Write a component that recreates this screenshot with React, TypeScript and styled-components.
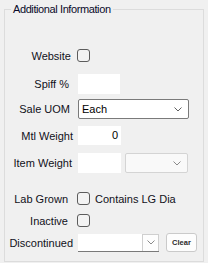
import React from "react";
import styled, { createGlobalStyle } from "styled-components";

const GlobalStyle = createGlobalStyle`
  html, body {
    margin: 0;
    padding: 0;
    background: #f0f0f0;
    font-family: "Liberation Sans", Arial, sans-serif;
  }
`;

const Page = styled.div`
  width: 208px;
  height: 263px;
  overflow: hidden;
  background: #f0f0f0;
`;

const Group = styled.fieldset`
  box-sizing: border-box;
  margin: 2px 0 0 4px;
  padding: 0;
  width: 200px;
  height: 260px;
  border: 1px solid #dcdcdc;
  min-width: 0;
`;

const Legend = styled.legend`
  margin-left: 6px;
  padding: 0 2px;
  font-size: 11px;
  line-height: 14px;
  letter-spacing: -0.4px;
  color: #0a0a2a;
`;

const Body = styled.div`
  display: flex;
  flex-direction: column;
`;

const Row = styled.div<{ $top: number; $h: number }>`
  display: flex;
  align-items: center;
  margin-top: ${(p) => p.$top}px;
  height: ${(p) => p.$h}px;
`;

const Label = styled.div<{ $trim?: number }>`
  box-sizing: border-box;
  width: 68px;
  padding-right: ${(p) => p.$trim || 0}px;
  text-align: right;
  font-size: 11px;
  color: #101020;
  white-space: nowrap;
`;

const Check = styled.span`
  box-sizing: border-box;
  display: inline-block;
  width: 13px;
  height: 13px;
  margin-left: 4px;
  border: 1px solid #5c5c5c;
  border-radius: 3px;
  background: #f3f3f3;
`;

const CheckText = styled.span`
  margin-left: 5px;
  font-size: 11px;
  color: #101020;
  white-space: nowrap;
`;

const TextBox = styled.div<{ $w: number }>`
  box-sizing: border-box;
  margin-left: 5px;
  width: ${(p) => p.$w}px;
  height: 100%;
  background: #fff;
  font-size: 11px;
  color: #000;
  text-align: right;
  padding-right: 3px;
  line-height: 19px;
`;

const Combo = styled.div<{ $w: number; $off?: boolean; $gap?: number }>`
  box-sizing: border-box;
  display: flex;
  align-items: center;
  justify-content: space-between;
  margin-left: ${(p) => (p.$gap === undefined ? 5 : p.$gap)}px;
  width: ${(p) => p.$w}px;
  height: 100%;
  padding: 0 6px 0 3px;
  background: ${(p) => (p.$off ? "#f9f9f9" : "#fff")};
  border: 1px solid ${(p) => (p.$off ? "#d4d4d4" : "#7a7a7a")};
  border-radius: 2px;
  font-size: 11px;
  color: #000;
`;

const Picker = styled.div`
  box-sizing: border-box;
  display: flex;
  justify-content: flex-end;
  margin-left: 5px;
  width: 81px;
  height: 18px;
  background: #fff;
  border-bottom: 1px solid #7a7a7a;
`;

const PickButton = styled.div`
  box-sizing: border-box;
  display: flex;
  align-items: center;
  justify-content: center;
  width: 17px;
  height: 100%;
  border: 1px solid #cfcfcf;
  border-bottom: none;
  background: #fdfdfd;
`;

const ClearButton = styled.div`
  box-sizing: border-box;
  display: flex;
  align-items: center;
  justify-content: center;
  margin-left: 7px;
  width: 31px;
  height: 19px;
  border: 1px solid #cacaca;
  border-radius: 3px;
  background: #fdfdfd;
  font-size: 7.5px;
  font-weight: bold;
  color: #2a2a2a;
`;

const Chevron = ({ color = "#606060" }: { color?: string }) => (
  <svg width="8" height="5" viewBox="0 0 8 5">
    <polyline points="0.5,0.5 4,4 7.5,0.5" fill="none" stroke={color} strokeWidth="1" />
  </svg>
);

export default function App() {
  return (
    <Page>
      <GlobalStyle />
      <Group>
        <Legend>Additional Information</Legend>
        <Body>
          <Row $top={33} $h={13}>
            <Label $trim={2}>Website</Label>
            <Check />
          </Row>
          <Row $top={12} $h={20}>
            <Label $trim={4}>Spiff %</Label>
            <TextBox $w={42} />
          </Row>
          <Row $top={5} $h={20}>
            <Label $trim={3}>Sale UOM</Label>
            <Combo $w={111}>
              <span>Each</span>
              <Chevron />
            </Combo>
          </Row>
          <Row $top={7} $h={19}>
            <Label>Mtl Weight</Label>
            <TextBox $w={43}>0</TextBox>
          </Row>
          <Row $top={8} $h={20}>
            <Label $trim={1}>Item Weight</Label>
            <TextBox $w={43} />
            <Combo $w={63} $off $gap={4}>
              <span />
              <Chevron color="#8a8a8a" />
            </Combo>
          </Row>
          <Row $top={19} $h={13}>
            <Label $trim={5}>Lab Grown</Label>
            <Check />
            <CheckText>Contains LG Dia</CheckText>
          </Row>
          <Row $top={9} $h={13}>
            <Label $trim={5}>Inactive</Label>
            <Check />
          </Row>
          <Row $top={6} $h={19}>
            <Label>Discontinued</Label>
            <Picker>
              <PickButton>
                <Chevron color="#8a8a8a" />
              </PickButton>
            </Picker>
            <ClearButton>Clear</ClearButton>
          </Row>
        </Body>
      </Group>
    </Page>
  );
}
